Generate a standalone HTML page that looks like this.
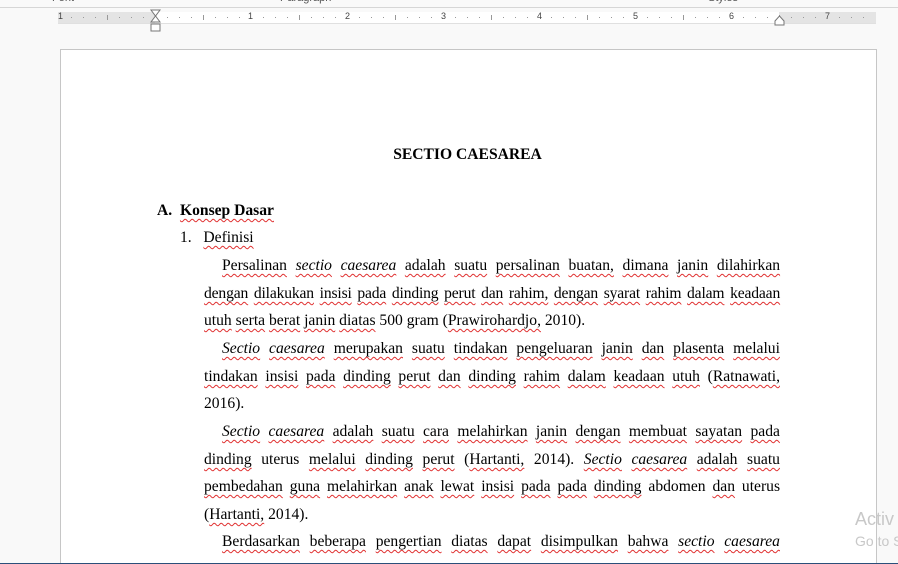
<!DOCTYPE html>
<html style="overflow:hidden;height:564px"><head><meta charset="utf-8"><style>
body{margin:0;width:898px;height:564px;background:#f9f9f9;position:relative;overflow:hidden;font-family:"Liberation Serif",serif}
.top{position:absolute;left:0;top:0;width:898px;height:7px;border-bottom:1px solid #d6d6d6;background:#f9f9f9;font:11px "Liberation Sans",sans-serif;color:#555}
.top span{position:absolute;top:-8px}
.ruler{position:absolute;left:58px;top:12px;width:818px;height:11px;background:#fff;border-bottom:1px solid #e0e0e0}
.gl{position:absolute;top:0;height:11px;background:#e4e4e4}
.num{position:absolute;top:-1px;font:9px "Liberation Sans",sans-serif;color:#444}
.tk{position:absolute;top:5px;width:1px;height:1px;background:#999}
.tl{position:absolute;top:3px;width:1px;height:5px;background:#999}
.page{position:absolute;left:60px;top:49px;width:815px;height:530px;background:#fff;border:1px solid #c6c6c6}
.l{position:absolute;left:204px;width:576px;font-size:15.6px;line-height:18px;text-align:justify;text-align-last:justify;white-space:nowrap;color:#000}
.nl{text-align-last:left}
u{text-decoration:underline wavy #e03030;text-decoration-thickness:1px;text-underline-offset:3px}
.wm{position:absolute;left:855px;font-family:"Liberation Sans",sans-serif;color:#c8c8c8;white-space:nowrap}
</style></head><body>
<div class="top"><span style="left:52px">Font</span><span style="left:280px">Paragraph</span><span style="left:708px">Styles</span></div>
<div class="ruler">
<div class="gl" style="left:0;width:97px"></div>
<div class="gl" style="left:721px;width:97px"></div>
<span class="num" style="left:0">1</span><span class="num" style="left:190px">1</span><span class="num" style="left:287px">2</span><span class="num" style="left:383px">3</span><span class="num" style="left:479px">4</span><span class="num" style="left:575px">5</span><span class="num" style="left:671px">6</span><span class="num" style="left:767px">7</span>
<div class="tl" style="left:49px"></div><div class="tl" style="left:145px"></div><div class="tl" style="left:241px"></div><div class="tl" style="left:337px"></div><div class="tl" style="left:433px"></div><div class="tl" style="left:529px"></div><div class="tl" style="left:625px"></div><div class="tl" style="left:721px"></div>
<div class="tk" style="left:13px"></div><div class="tk" style="left:25px"></div><div class="tk" style="left:37px"></div><div class="tk" style="left:61px"></div><div class="tk" style="left:73px"></div><div class="tk" style="left:85px"></div>
<div class="tk" style="left:109px"></div><div class="tk" style="left:121px"></div><div class="tk" style="left:133px"></div><div class="tk" style="left:157px"></div><div class="tk" style="left:169px"></div><div class="tk" style="left:181px"></div>
<div class="tk" style="left:205px"></div><div class="tk" style="left:217px"></div><div class="tk" style="left:229px"></div><div class="tk" style="left:253px"></div><div class="tk" style="left:265px"></div><div class="tk" style="left:277px"></div>
<div class="tk" style="left:301px"></div><div class="tk" style="left:313px"></div><div class="tk" style="left:325px"></div><div class="tk" style="left:349px"></div><div class="tk" style="left:361px"></div><div class="tk" style="left:373px"></div>
<div class="tk" style="left:397px"></div><div class="tk" style="left:409px"></div><div class="tk" style="left:421px"></div><div class="tk" style="left:445px"></div><div class="tk" style="left:457px"></div><div class="tk" style="left:469px"></div>
<div class="tk" style="left:493px"></div><div class="tk" style="left:505px"></div><div class="tk" style="left:517px"></div><div class="tk" style="left:541px"></div><div class="tk" style="left:553px"></div><div class="tk" style="left:565px"></div>
<div class="tk" style="left:589px"></div><div class="tk" style="left:601px"></div><div class="tk" style="left:613px"></div><div class="tk" style="left:637px"></div><div class="tk" style="left:649px"></div><div class="tk" style="left:661px"></div>
<div class="tk" style="left:685px"></div><div class="tk" style="left:697px"></div><div class="tk" style="left:709px"></div><div class="tk" style="left:733px"></div><div class="tk" style="left:745px"></div><div class="tk" style="left:757px"></div><div class="tk" style="left:781px"></div><div class="tk" style="left:793px"></div><div class="tk" style="left:805px"></div>
</div>
<svg style="position:absolute;left:150px;top:9px" width="12" height="24"><path d="M1 1h9L5.5 7zM1 13h9L5.5 7zM1 15h9v7H1z" fill="#fff" stroke="#777"/></svg>
<svg style="position:absolute;left:774px;top:14px" width="12" height="12"><path d="M1 11h9V7L5.5 2 1 7z" fill="#fff" stroke="#777"/></svg>
<div class="page"></div>
<div style="position:absolute;left:0;top:563px;width:898px;height:1px;background:#2b4f7a"></div>
<div class="l nl" style="left:60px;width:815px;top:146px;text-align:center;text-align-last:center;font-weight:bold">SECTIO CAESAREA</div>
<div class="l nl" style="left:157px;top:202px;font-weight:bold">A.&nbsp;&nbsp;<u>Konsep Dasar</u></div>
<div class="l nl" style="left:180px;top:229px">1.&nbsp;&nbsp;&nbsp;<u>Definisi</u></div>
<div class="l" style="left:222px;width:558px;top:257px"><u>Persalinan</u> <u><i>sectio</i></u> <u><i>caesarea</i></u> <u>adalah</u> <u>suatu</u> <u>persalinan</u> <u>buatan,</u> <u>dimana</u> <u>janin</u> <u>dilahirkan</u></div>
<div class="l" style="top:285px;letter-spacing:-0.15px"><u>dengan</u> <u>dilakukan</u> <u>insisi</u> <u>pada</u> <u>dinding</u> <u>perut</u> <u>dan</u> <u>rahim,</u> <u>dengan</u> <u>syarat</u> <u>rahim</u> <u>dalam</u> <u>keadaan</u></div>
<div class="l nl" style="top:312px"><u>utuh</u> <u>serta</u> <u>berat</u> <u>janin</u> <u>diatas</u> 500 gram (<u>Prawirohardjo,</u> 2010).</div>
<div class="l" style="left:222px;width:558px;top:340px"><u><i>Sectio</i></u> <u><i>caesarea</i></u> <u>merupakan</u> <u>suatu</u> <u>tindakan</u> <u>pengeluaran</u> <u>janin</u> <u>dan</u> <u>plasenta</u> <u>melalui</u></div>
<div class="l" style="top:368px"><u>tindakan</u> <u>insisi</u> <u>pada</u> <u>dinding</u> <u>perut</u> <u>dan</u> <u>dinding</u> <u>rahim</u> <u>dalam</u> <u>keadaan</u> <u>utuh</u> (<u>Ratnawati,</u></div>
<div class="l nl" style="top:395px">2016).</div>
<div class="l" style="left:222px;width:558px;top:423px"><u><i>Sectio</i></u> <u><i>caesarea</i></u> <u>adalah</u> <u>suatu</u> <u>cara</u> <u>melahirkan</u> <u>janin</u> <u>dengan</u> <u>membuat</u> <u>sayatan</u> <u>pada</u></div>
<div class="l" style="top:451px"><u>dinding</u> uterus <u>melalui</u> <u>dinding</u> <u>perut</u> (<u>Hartanti,</u> 2014). <u><i>Sectio</i></u> <u><i>caesarea</i></u> <u>adalah</u> <u>suatu</u></div>
<div class="l" style="top:478px"><u>pembedahan</u> <u>guna</u> <u>melahirkan</u> <u>anak</u> <u>lewat</u> <u>insisi</u> <u>pada</u> <u>pada</u> <u>dinding</u> abdomen <u>dan</u> uterus</div>
<div class="l nl" style="top:506px">(<u>Hartanti,</u> 2014).</div>
<div class="l" style="left:222px;width:558px;top:533px"><u>Berdasarkan</u> <u>beberapa</u> <u>pengertian</u> <u>diatas</u> <u>dapat</u> <u>disimpulkan</u> <u>bahwa</u> <u><i>sectio</i></u> <u><i>caesarea</i></u></div>
<div class="wm" style="top:509px;font-size:18px">Activ</div>
<div class="wm" style="top:533px;font-size:14px">Go to S</div>
</body></html>
